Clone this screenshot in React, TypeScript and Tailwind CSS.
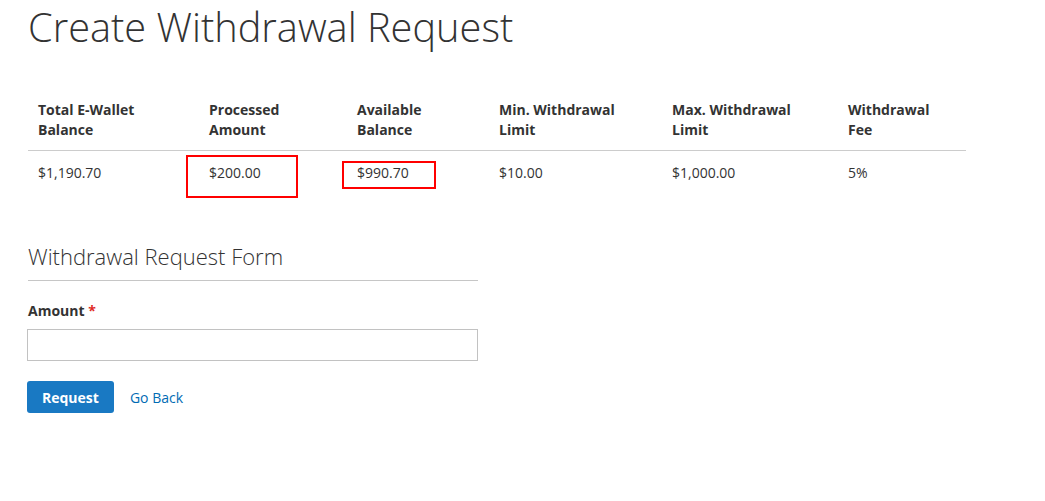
import React from 'react';

const columns = [
  { label: ['Total E-Wallet', 'Balance'], value: '$1,190.70', width: 'w-[171px]' },
  { label: ['Processed', 'Amount'], value: '$200.00', width: 'w-[148px]' },
  { label: ['Available', 'Balance'], value: '$990.70', width: 'w-[142px]' },
  { label: ['Min. Withdrawal', 'Limit'], value: '$10.00', width: 'w-[173px]' },
  { label: ['Max. Withdrawal', 'Limit'], value: '$1,000.00', width: 'w-[176px]' },
  { label: ['Withdrawal', 'Fee'], value: '5%', width: 'w-[128px]' },
];

export default function App() {
  return (
    <div className="relative min-h-[501px] w-[1045px] bg-white pl-[28px] text-[#333] font-['Open_Sans',sans-serif]">
      <h1 className="pt-[5px] text-[39.75px] font-light leading-[44px]">Create Withdrawal Request</h1>

      <table className="mt-[40px] w-[938px] table-fixed border-collapse text-[14px] leading-[20px]">
        <thead>
          <tr className="border-b border-[#ccc]">
            {columns.map((c) => (
              <th key={c.value} className={`${c.width} px-[10px] pt-[11px] pb-[10px] text-left align-top font-bold`}>
                {c.label[0]}
                <br />
                {c.label[1]}
              </th>
            ))}
          </tr>
        </thead>
        <tbody>
          <tr>
            {columns.map((c) => (
              <td key={c.value} className="px-[10px] pt-[12px] pb-[10px] align-top">
                {c.value}
              </td>
            ))}
          </tr>
        </tbody>
      </table>

      {/* annotation boxes */}
      <div className="absolute left-[186px] top-[155px] h-[43px] w-[112px] border-2 border-[#ff0000]" />
      <div className="absolute left-[342px] top-[161px] h-[28px] w-[94px] border-2 border-[#ff0000]" />

      <div className="mt-[49px] w-[450px]">
        <div className="border-b border-[#c6c6c6] pb-[10px] text-[22px] font-light leading-[28px]">
          Withdrawal Request Form
        </div>
        <label className="mt-[20px] block text-[14px] font-bold leading-[20px]">
          Amount <span className="text-[#e02b27]">*</span>
        </label>
        <input
          type="text"
          className="mt-[8px] -ml-px block h-[32px] w-[451px] border border-[#c2c2c2] px-[9px] text-[14px] outline-none"
        />
        <div className="mt-[20px] -ml-px flex items-center gap-[16px]">
          <button className="h-[32px] rounded-[3px] bg-[#1979c3] px-[15px] text-[14px] font-bold text-white">
            Request
          </button>
          <a className="text-[14px] text-[#006bb4]">Go Back</a>
        </div>
      </div>
    </div>
  );
}
